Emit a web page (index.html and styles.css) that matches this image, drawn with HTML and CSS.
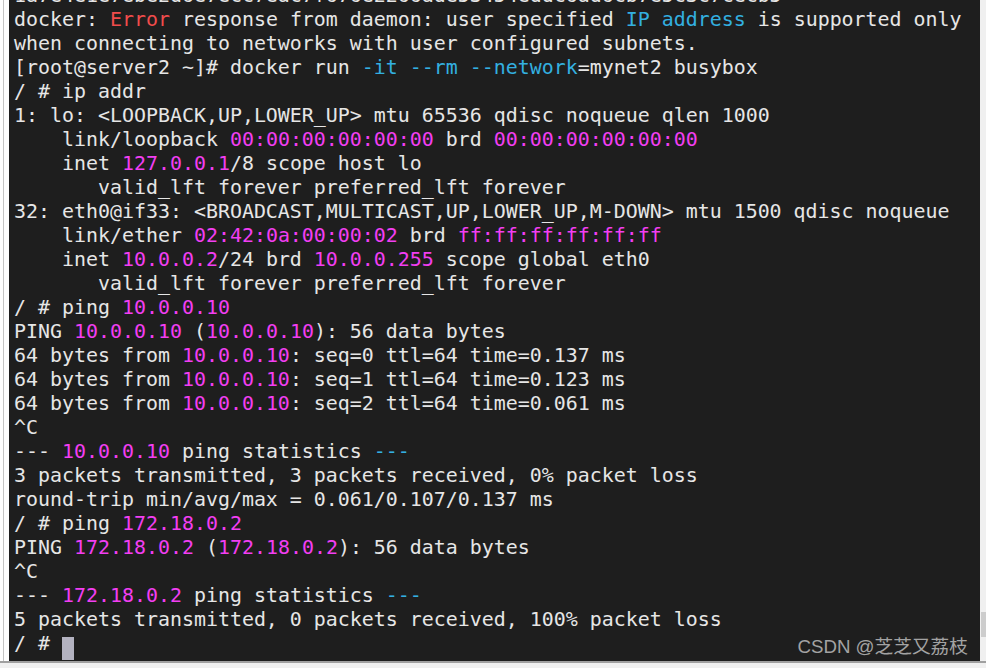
FILE: index.html
```html
<!DOCTYPE html>
<html lang="en">
<head>
<meta charset="utf-8">
<title>terminal</title>
<link rel="stylesheet" href="styles.css">
</head>
<body>
<div class="window">
  <div class="main">
    <div class="left-strip"></div>
    <div class="terminal">
<pre class="out"><span class="line">1a7e4e1e7ebe2d6e7ecc7eac7f676e2266ade53454eddc6ad6cb7e5c3c7cecb5</span>
docker: <span class="r">Error</span> response from daemon: user specified <span class="b">IP address</span> is supported only
when connecting to networks with user configured subnets.
[root@server2 ~]# docker run <span class="b">-it</span> <span class="b">--rm</span> <span class="b">--network</span>=mynet2 busybox
/ # ip addr
1: lo: &lt;LOOPBACK,UP,LOWER_UP&gt; mtu 65536 qdisc noqueue qlen 1000
    link/loopback <span class="m">00:00:00:00:00:00</span> brd <span class="m">00:00:00:00:00:00</span>
    inet <span class="m">127.0.0.1</span>/8 scope host lo
       valid_lft forever preferred_lft forever
32: eth0@if33: &lt;BROADCAST,MULTICAST,UP,LOWER_UP,M-DOWN&gt; mtu 1500 qdisc noqueue
    link/ether <span class="m">02:42:0a:00:00:02</span> brd <span class="m">ff:ff:ff:ff:ff:ff</span>
    inet <span class="m">10.0.0.2</span>/24 brd <span class="m">10.0.0.255</span> scope global eth0
       valid_lft forever preferred_lft forever
/ # ping <span class="m">10.0.0.10</span>
PING <span class="m">10.0.0.10</span> (<span class="m">10.0.0.10</span>): 56 data bytes
64 bytes from <span class="m">10.0.0.10</span>: seq=0 ttl=64 time=0.137 ms
64 bytes from <span class="m">10.0.0.10</span>: seq=1 ttl=64 time=0.123 ms
64 bytes from <span class="m">10.0.0.10</span>: seq=2 ttl=64 time=0.061 ms
^C
--- <span class="m">10.0.0.10</span> ping statistics <span class="b">---</span>
3 packets transmitted, 3 packets received, 0% packet loss
round-trip min/avg/max = 0.061/0.107/0.137 ms
/ # ping <span class="m">172.18.0.2</span>
PING <span class="m">172.18.0.2</span> (<span class="m">172.18.0.2</span>): 56 data bytes
^C
--- <span class="m">172.18.0.2</span> ping statistics <span class="b">---</span>
5 packets transmitted, 0 packets received, 100% packet loss
/ # <span class="cursor"> </span></pre>
      <div class="watermark">CSDN @芝芝又荔枝</div>
    </div>
    <div class="scrollbar">
      <div class="track-top"></div>
      <div class="thumb"></div>
    </div>
  </div>
  <div class="bottom-line"></div>
  <div class="bottom-pad"></div>
</div>
</body>
</html>
```

FILE: styles.css
```css
html, body {
  margin: 0;
  padding: 0;
  background: #ffffff;
  width: 986px;
  height: 668px;
  overflow: hidden;
}

.window {
  display: flex;
  flex-direction: column;
  width: 986px;
  height: 668px;
}

.main {
  display: flex;
  height: 661px;
}

.left-strip {
  width: 5px;
  margin-left: 3px;
  border-left: 1px solid #c4c4c4;
  background: #ffffff;
}

.terminal {
  position: relative;
  flex: 1;
  background: #1e1e1e;
  overflow: hidden;
  padding-left: 5px;
}

.out {
  margin: -16px 0 0 0;
  font-family: "DejaVu Sans Mono", monospace;
  font-size: 19.93px;
  line-height: 24px;
  color: #e6e6e6;
  white-space: pre;
}

.m { color: #f23ef2; }
.r { color: #f14c4c; }
.b { color: #33b0e0; }

.cursor {
  display: inline-block;
  width: 12px;
  height: 23px;
  background: #b3b2c0;
  vertical-align: -5px;
}

.watermark {
  position: absolute;
  right: 12px;
  bottom: 3px;
  font-family: "Liberation Sans", "Noto Sans CJK SC", sans-serif;
  font-size: 18.7px;
  color: #a3a3a3;
}

.scrollbar {
  width: 6px;
  background: #f0f0f0;
  display: flex;
  flex-direction: column;
}

.track-top {
  height: 612px;
}

.thumb {
  height: 25px;
  margin-left: 1px;
  background: #cdcdcd;
}

.bottom-line {
  height: 2px;
  background: #a0a0a0;
}

.bottom-pad {
  flex: 1;
  background: #f0f0f0;
}
```
